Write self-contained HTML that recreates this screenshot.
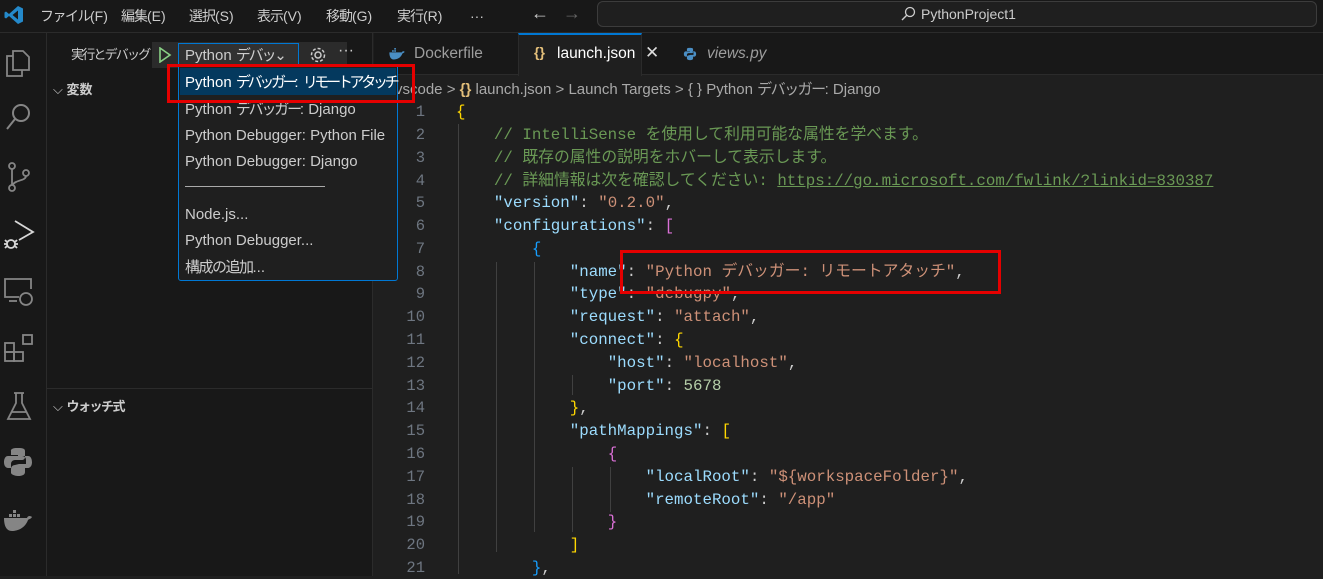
<!DOCTYPE html>
<html><head><meta charset="utf-8"><style>
*{margin:0;padding:0;box-sizing:border-box}
body{width:1323px;height:576px;overflow:hidden;background:#1f1f1f;font-family:"Liberation Sans","Noto Sans CJK JP",sans-serif;color:#ccc;position:relative}
.abs{position:absolute}
.j{letter-spacing:-2.2px}
.jj{letter-spacing:-3.3px}
.title{left:0;top:0;width:1323px;height:33px;background:#181818;border-bottom:1px solid #2b2b2b}
.menu span{position:absolute;top:7px;font-size:14px;color:#ccc;line-height:18px;white-space:nowrap}
.act{left:0;top:33px;width:47px;height:543px;background:#181818;border-right:1px solid #2b2b2b}
.side{left:47px;top:33px;width:326px;height:543px;background:#181818;border-right:1px solid #2b2b2b}
.tabs{left:374px;top:33px;width:949px;height:42px;background:#181818;border-bottom:1px solid #2b2b2b}
.code{font-family:"Liberation Mono","Noto Sans CJK JP",monospace;font-size:15.8px;white-space:pre}
.ln{position:absolute;left:380px;width:45px;text-align:right;color:#6e7681;font-family:"Liberation Mono",monospace;font-size:15.5px;line-height:22px;height:22px}
.cl{position:absolute;left:456px;line-height:22px;height:22px}
.k{color:#9cdcfe}.s{color:#ce9178}.n{color:#b5cea8}.c{color:#6a9955}.y{color:#ffd700}.p{color:#da70d6}.b{color:#179fff}
.dd{font-size:15px;color:#ccc;position:absolute;left:185px;line-height:18px;white-space:nowrap}
.guide{position:absolute;width:1px;background:#404040}
</style></head><body>
<div class="abs title">
<svg class="abs" style="left:4px;top:5px" width="20" height="20" viewBox="0 0 20 20"><path d="M14 1 L19 3.5 V16.5 L14 19 L5 11 L2 13.5 L0.5 12.5 V7.5 L2 6.5 L5 9 Z M14 5.5 L8.5 10 L14 14.5 Z" fill="#2489ca"/></svg>
<div class="menu">
<span style="left:40px"><span class="j" style="position:static;letter-spacing:-1.5px">ファイル</span>(F)</span><span style="left:121px"><span class="j" style="position:static;letter-spacing:-1px">編集</span>(E)</span><span style="left:189px"><span class="j" style="position:static;letter-spacing:-1px">選択</span>(S)</span><span style="left:257px"><span class="j" style="position:static;letter-spacing:-1px">表示</span>(V)</span><span style="left:326px"><span class="j" style="position:static;letter-spacing:-1px">移動</span>(G)</span><span style="left:397px"><span class="j" style="position:static;letter-spacing:-1px">実行</span>(R)</span><span style="left:470px">···</span>
<span style="left:531px;font-size:18px;top:4px">←</span><span style="left:563px;font-size:18px;top:4px;color:#666">→</span>
</div>
<div class="abs" style="left:597px;top:1px;width:720px;height:26px;border:1px solid #3c3c3c;border-radius:6px;background:#1f1f1f"></div>
<svg class="abs" style="left:900px;top:6px" width="16" height="16" viewBox="0 0 16 16"><circle cx="10" cy="6" r="4.5" stroke="#ccc" fill="none" stroke-width="1.3"/><path d="M7 9 L2 14" stroke="#ccc" stroke-width="1.4"/></svg>
<span class="abs" style="left:921px;top:6px;font-size:14px;color:#ccc">PythonProject1</span>
</div>

<div class="abs act">
<svg class="abs" style="left:5px;top:15px" width="28" height="30" viewBox="0 0 28 30" fill="none" stroke="#858585" stroke-width="1.8"><path d="M8 3 H18 L24 9 V22 H8 Z"/><path d="M8 8 H2 V28 H17 V22"/></svg>
<svg class="abs" style="left:5px;top:70px" width="28" height="30" viewBox="0 0 28 30" fill="none" stroke="#858585" stroke-width="2"><circle cx="16" cy="10" r="8"/><path d="M10 16 L2 26"/></svg>
<svg class="abs" style="left:5px;top:128px" width="28" height="32" viewBox="0 0 28 32" fill="none" stroke="#858585" stroke-width="1.8"><circle cx="7" cy="5" r="3"/><circle cx="7" cy="27" r="3"/><circle cx="21" cy="12" r="3"/><path d="M7 8 V24 M21 15 C21 20 9 19 8 24"/></svg>
<svg class="abs" style="left:3px;top:185px" width="32" height="34" viewBox="0 0 32 34" fill="none" stroke="#d7d7d7" stroke-width="1.8"><path d="M12 3 L30 14 L16 22"/><circle cx="8" cy="26" r="4"/><path d="M2 22 L4 24 M14 22 L12 24 M2 30 L4 28 M14 30 L12 28 M1 26 H4 M12 26 H15"/></svg>
<svg class="abs" style="left:3px;top:243px" width="32" height="32" viewBox="0 0 32 32" fill="none" stroke="#858585" stroke-width="1.8"><path d="M16 21 H2 V3 H28 V13"/><path d="M6 25 H14"/><circle cx="23" cy="23" r="6"/></svg>
<svg class="abs" style="left:3px;top:300px" width="32" height="32" viewBox="0 0 32 32" fill="none" stroke="#858585" stroke-width="1.8"><rect x="2" y="10" width="9" height="9"/><rect x="2" y="19" width="9" height="9"/><rect x="11" y="19" width="9" height="9"/><rect x="20" y="2" width="9" height="9"/></svg>
<svg class="abs" style="left:5px;top:358px" width="28" height="32" viewBox="0 0 28 32" fill="none" stroke="#858585" stroke-width="1.8"><path d="M9 2 H19 M11 2 V12 L3 28 H25 L17 12 V2 M6 21 H22"/></svg>
<svg class="abs" style="left:3px;top:413px" width="30" height="32" viewBox="0 0 30 32"><path d="M14 2 C7 2 8 5 8 5 V9 H15 V10 H5 C1 10 1 16 1 16 C1 22 5 22 5 22 H8 V18 C8 14 12 14 12 14 H19 C22 14 22 11 22 11 V5 C22 2 18 2 14 2 Z M16 18 H23 V14 C23 10 19 10 19 10 H25 C29 10 29 16 29 16 C29 22 25 22 25 22 H22 V26 C22 30 16 30 16 30 C9 30 8 27 8 27 V23 C8 19 12 19 12 19 Z" fill="#858585"/></svg>
<svg class="abs" style="left:3px;top:475px" width="30" height="26" viewBox="0 0 30 26" fill="#858585"><rect x="10" y="2" width="3" height="3"/><rect x="6" y="6" width="3" height="3"/><rect x="10" y="6" width="3" height="3"/><rect x="14" y="6" width="3" height="3"/><path d="M1 10 H24 C25 7 28 8 29 9 C28 11 26 11 25 12 C22 20 15 23 9 23 C3 23 1 17 1 10 Z"/></svg>
</div>

<div class="abs side">
<span class="abs j" style="left:24px;top:14px;font-size:13px;color:#ccc;line-height:16px;letter-spacing:-1.8px">実行とデバッグ</span>
<div class="abs" style="left:105px;top:9px;width:195px;height:26px;background:#2b2b2b"></div>
<svg class="abs" style="left:111px;top:14px" width="14" height="16" viewBox="0 0 14 16"><path d="M2 1 L12 8 L2 15 Z" fill="none" stroke="#89d185" stroke-width="1.6"/></svg>
<div class="abs" style="left:131px;top:10px;width:121px;height:24px;border:1px solid #0078d4;background:#313131"></div>
<span class="abs" style="left:138px;top:14px;font-size:15px;color:#ccc;line-height:18px;white-space:nowrap">Python <span class="j">デバッ</span>⌄</span>
<svg class="abs" style="left:262px;top:13px" width="18" height="18" viewBox="0 0 18 18" fill="none" stroke="#ccc" stroke-width="1.5"><circle cx="9" cy="9" r="3"/><circle cx="9" cy="9" r="6.5" stroke-dasharray="3 2"/></svg>
<span class="abs" style="left:291px;top:9px;font-size:16px;color:#ccc">···</span>
<span class="abs" style="left:6px;top:49px;font-size:13px;color:#ccc;line-height:16px">⌵ <b>変数</b></span>
<div class="abs" style="left:0;top:355px;width:326px;height:1px;background:#2b2b2b"></div>
<span class="abs" style="left:6px;top:366px;font-size:13px;color:#ccc;line-height:16px">⌵ <b class="j" style="letter-spacing:-1.5px">ウォッチ式</b></span>
</div>

<div class="abs tabs">
<div class="abs" style="left:144px;top:0;width:124px;height:43px;background:#1f1f1f;border-top:2px solid #0078d4;border-left:1px solid #2b2b2b;border-right:1px solid #2b2b2b"></div>
<svg class="abs" style="left:14px;top:15px" width="18" height="12" viewBox="0 0 30 22" fill="#4a8ec4"><rect x="10" y="0" width="3" height="3"/><rect x="6" y="4" width="3" height="3"/><rect x="10" y="4" width="3" height="3"/><path d="M1 8 H24 C25 5 28 6 29 7 C28 9 26 9 25 10 C22 18 15 21 9 21 C3 21 1 15 1 8 Z"/></svg>
<span class="abs" style="left:40px;top:12px;font-size:15.5px;color:#9d9d9d">Dockerfile</span>
<span class="abs" style="left:160px;top:11px;font-size:14px;color:#e5c07b;font-weight:bold">{}</span>
<span class="abs" style="left:183px;top:12px;font-size:15.5px;color:#fff">launch.json</span>
<span class="abs" style="left:271px;top:10px;font-size:17px;color:#ddd">✕</span>
<svg class="abs" style="left:309px;top:14px" width="14" height="14" viewBox="0 0 30 32"><path d="M14 2 C7 2 8 5 8 5 V9 H15 V10 H5 C1 10 1 16 1 16 C1 22 5 22 5 22 H8 V18 C8 14 12 14 12 14 H19 C22 14 22 11 22 11 V5 C22 2 18 2 14 2 Z M16 18 H23 V14 C23 10 19 10 19 10 H25 C29 10 29 16 29 16 C29 22 25 22 25 22 H22 V26 C22 30 16 30 16 30 C9 30 8 27 8 27 V23 C8 19 12 19 12 19 Z" fill="#4a8ec4"/></svg>
<span class="abs" style="left:333px;top:12px;font-size:15.5px;color:#9d9d9d;font-style:italic">views.py</span>
</div>

<div class="abs" style="left:395px;top:81px;font-size:15px;color:#a9a9a9;white-space:nowrap;line-height:18px">vscode &gt; <span style="color:#e5c07b;font-weight:bold">{}</span> launch.json &gt; Launch Targets &gt; { } Python <span class="j" style="letter-spacing:-1.5px">デバッガー</span>: Django</div>

<div class="guide" style="left:458px;top:124px;height:450px"></div>
<div class="guide" style="left:496px;top:262px;height:290px"></div>
<div class="guide" style="left:534px;top:262px;height:270px"></div>
<div class="guide" style="left:572px;top:375px;height:20px"></div>
<div class="guide" style="left:572px;top:467px;height:65px"></div>
<div class="guide" style="left:610px;top:467px;height:45px"></div>

<div class="code">
<div class="ln" style="top:101px">1</div><div class="ln" style="top:124px">2</div><div class="ln" style="top:147px">3</div><div class="ln" style="top:170px">4</div><div class="ln" style="top:192px">5</div><div class="ln" style="top:215px">6</div><div class="ln" style="top:238px">7</div><div class="ln" style="top:261px">8</div><div class="ln" style="top:283px">9</div><div class="ln" style="top:306px">10</div><div class="ln" style="top:329px">11</div><div class="ln" style="top:352px">12</div><div class="ln" style="top:375px">13</div><div class="ln" style="top:397px">14</div><div class="ln" style="top:420px">15</div><div class="ln" style="top:443px">16</div><div class="ln" style="top:466px">17</div><div class="ln" style="top:489px">18</div><div class="ln" style="top:511px">19</div><div class="ln" style="top:534px">20</div><div class="ln" style="top:557px">21</div>
<div class="cl" style="top:101px"><span class="y">{</span></div>
<div class="cl c" style="top:124px">    // IntelliSense を使用して利用可能な属性を学べます。</div>
<div class="cl c" style="top:147px">    // 既存の属性の説明をホバーして表示します。</div>
<div class="cl c" style="top:170px">    // 詳細情報は次を確認してください: <u>https://go.microsoft.com/fwlink/?linkid=830387</u></div>
<div class="cl" style="top:192px">    <span class="k">"version"</span>: <span class="s">"0.2.0"</span>,</div>
<div class="cl" style="top:215px">    <span class="k">"configurations"</span>: <span class="p">[</span></div>
<div class="cl" style="top:238px">        <span class="b">{</span></div>
<div class="cl" style="top:261px">            <span class="k">"name"</span>: <span class="s">"Python デバッガー: リモートアタッチ"</span>,</div>
<div class="cl" style="top:283px">            <span class="k">"type"</span>: <span class="s">"debugpy"</span>,</div>
<div class="cl" style="top:306px">            <span class="k">"request"</span>: <span class="s">"attach"</span>,</div>
<div class="cl" style="top:329px">            <span class="k">"connect"</span>: <span class="y">{</span></div>
<div class="cl" style="top:352px">                <span class="k">"host"</span>: <span class="s">"localhost"</span>,</div>
<div class="cl" style="top:375px">                <span class="k">"port"</span>: <span class="n">5678</span></div>
<div class="cl" style="top:397px">            <span class="y">}</span>,</div>
<div class="cl" style="top:420px">            <span class="k">"pathMappings"</span>: <span class="y">[</span></div>
<div class="cl" style="top:443px">                <span class="p">{</span></div>
<div class="cl" style="top:466px">                    <span class="k">"localRoot"</span>: <span class="s">"${workspaceFolder}"</span>,</div>
<div class="cl" style="top:489px">                    <span class="k">"remoteRoot"</span>: <span class="s">"/app"</span></div>
<div class="cl" style="top:511px">                <span class="p">}</span></div>
<div class="cl" style="top:534px">            <span class="y">]</span></div>
<div class="cl" style="top:557px">        <span class="b">}</span>,</div>
</div>

<div class="abs" style="left:620px;top:250px;width:381px;height:44px;border:3px solid #e50000"></div>

<div class="abs" style="left:178px;top:64px;width:220px;height:217px;background:#1f1f1f;border:1px solid #0078d4;border-radius:3px"></div>
<div class="abs" style="left:180px;top:68px;width:216px;height:27px;background:#04395e"></div>
<span class="dd" style="top:74px;color:#fff">Python <span class="jj">デバッガー</span>: <span class="jj">リモートアタッチ</span></span>
<span class="dd" style="top:101px">Python <span class="j">デバッガー</span>: Django</span>
<span class="dd" style="top:127px">Python Debugger: Python File</span>
<span class="dd" style="top:153px">Python Debugger: Django</span>
<div class="abs" style="left:185px;top:186px;width:140px;height:1px;background:#aaa"></div>
<span class="dd" style="top:206px">Node.js...</span>
<span class="dd" style="top:232px">Python Debugger...</span>
<span class="dd" style="top:259px"><span class="j" style="letter-spacing:-1.5px">構成の追加</span>...</span>
<div class="abs" style="left:167px;top:64px;width:248px;height:39px;border:3px solid #e50000"></div>
</body></html>
